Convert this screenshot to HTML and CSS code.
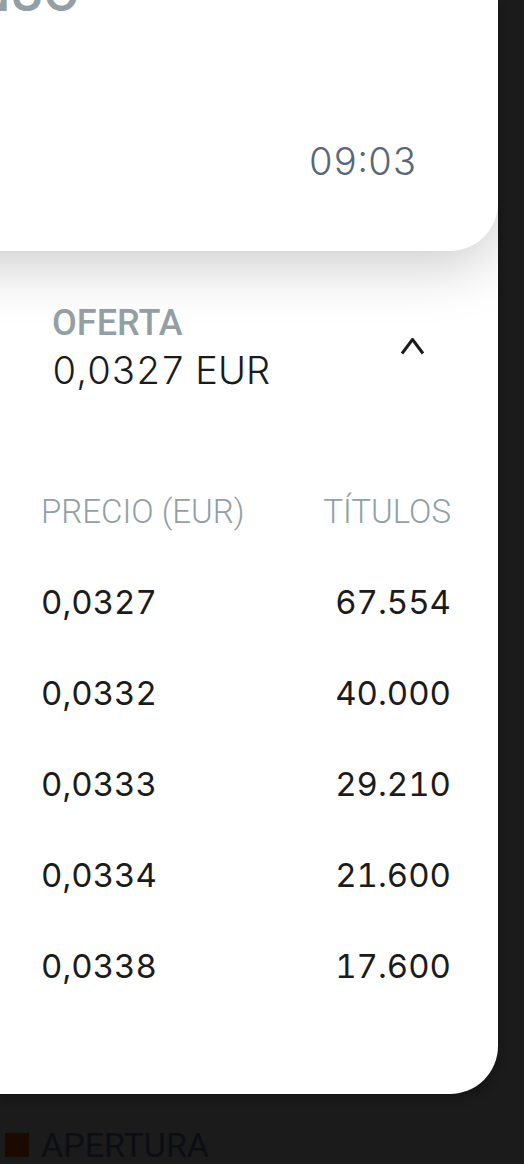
FILE: index.html
```html
<!DOCTYPE html>
<html lang="es">
<head>
  <meta charset="UTF-8">
  <meta name="viewport" content="width=device-width, initial-scale=1">
  <title>Oferta</title>
  <link rel="stylesheet" href="styles.css">
</head>
<body>
  <main class="modal">
    <header class="summary">
      <h1 class="market">NUO</h1>
      <time class="time">09:03</time>
    </header>

    <section class="offer">
      <div class="offer-head">
        <div>
          <h2 class="offer-title">OFERTA</h2>
          <p class="offer-price">0,0327 EUR</p>
        </div>
        <button class="toggle" type="button" aria-label="Plegar oferta">
          <svg width="26" height="20" viewBox="0 0 26 20" fill="none" stroke="#1b1b1b" stroke-width="3" stroke-linejoin="round">
            <path d="M2 17.5 L12.5 3.5 L23 17.5"/>
          </svg>
        </button>
      </div>

      <table class="prices">
        <thead>
          <tr><th>PRECIO (EUR)</th><th>TÍTULOS</th></tr>
        </thead>
        <tbody>
          <tr><td>0,0327</td><td>67.554</td></tr>
          <tr><td>0,0332</td><td>40.000</td></tr>
          <tr><td>0,0333</td><td>29.210</td></tr>
          <tr><td>0,0334</td><td>21.600</td></tr>
          <tr><td>0,0338</td><td>17.600</td></tr>
        </tbody>
      </table>
    </section>
  </main>

  <footer class="legend">
    <span class="legend-mark"></span>
    <span>APERTURA</span>
  </footer>
</body>
</html>
```

FILE: styles.css
```css
* {
  box-sizing: border-box;
}
body {
  margin: 0;
  background: #1b1b1b;
  color: #1b1b1b;
  font-family: Inter, sans-serif;
  font-variant-numeric: tabular-nums;
  overflow-x: hidden;
}
h1, h2, p {
  margin: 0;
}
.modal {
  margin-right: 26px;
  background: white;
  border-radius: 0 0 48px 0;
  box-shadow: 0 4px 12px rgba(0, 0, 0, 0.3);
  overflow: hidden;
}
.summary {
  margin-left: -80px;
  padding: 0 81px 66px 55px;
  background: white;
  border-radius: 0 0 48px 0;
  box-shadow: 0 12px 60px rgba(0, 0, 0, 0.22);
}
.market {
  margin-top: -34px;
  color: #939fa3;
  font-size: 46px;
  font-weight: 600;
  line-height: 56px;
}
.time {
  display: block;
  margin-top: 115px;
  color: #5b6679;
  font-size: 38px;
  font-weight: 300;
  line-height: 48px;
  text-align: right;
}
.offer {
  padding: 48px 47px 82px 41px;
}
.offer-head {
  display: flex;
  justify-content: space-between;
  align-items: center;
  padding: 0 25px 0 11px;
}
.offer-title {
  color: #939fa3;
  font-family: Roboto, sans-serif;
  font-size: 36px;
  font-weight: 500;
  line-height: 48px;
}
.offer-price {
  font-size: 38px;
  font-weight: 300;
  line-height: 46px;
}
.toggle {
  display: flex;
  padding: 0;
  border: none;
  background: none;
  cursor: pointer;
}
.prices {
  width: 100%;
  margin-top: 73px;
  border-collapse: collapse;
  font-size: 33px;
  line-height: 91px;
}
.prices th,
.prices td {
  padding: 0;
  text-align: left;
  white-space: nowrap;
}
.prices th {
  color: #939fa3;
  font-family: Roboto, sans-serif;
  font-size: 33px;
  font-weight: 300;
}
.prices th:last-child,
.prices td:last-child {
  text-align: right;
}
.legend {
  display: flex;
  align-items: center;
  gap: 12px;
  padding: 31px 5px 0;
  color: #0b0e13;
  font-family: Roboto, sans-serif;
  font-size: 34px;
  line-height: 40px;
}
.legend-mark {
  width: 24px;
  height: 24px;
  background: #1b0a00;
}
```
